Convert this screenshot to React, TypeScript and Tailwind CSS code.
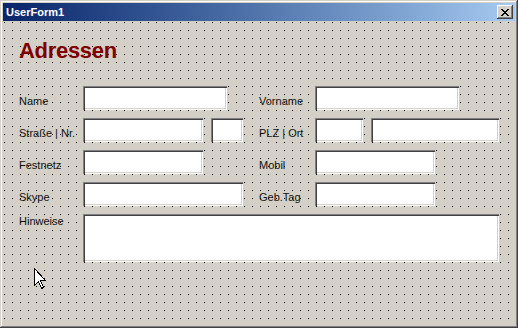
import type { ReactNode } from "react";

function Field({ className }: { className: string }) {
  return (
    <div
      className={`bg-white shadow-[inset_1px_1px_#808080,inset_2px_2px_#404040,inset_-1px_-1px_#ffffff,inset_-2px_-2px_#d4d0c8] ${className}`}
    />
  );
}

function Label({ children, className }: { children: ReactNode; className: string }) {
  return <div className={`shrink-0 text-[11px] leading-[13px] text-[#111] ${className}`}>{children}</div>;
}

function CloseGlyph() {
  const rows = ["XX....XX", ".XX..XX.", "..XXXX..", "...XX...", "..XXXX..", ".XX..XX.", "XX....XX"];
  return (
    <svg width="8" height="7" viewBox="0 0 8 7" shapeRendering="crispEdges">
      {rows.flatMap((r, y) =>
        r.split("").map((c, x) => (c === "X" ? <rect key={`${x}-${y}`} x={x} y={y} width="1" height="1" fill="#000" /> : null))
      )}
    </svg>
  );
}

function Cursor() {
  return (
    <svg
      className="absolute left-[34px] top-[268px]"
      width="13"
      height="22"
      viewBox="0 0 13 22"
      shapeRendering="crispEdges"
    >
      <path d="M0.5 0.5 V17.5 L4.5 13.5 L7.5 20.5 L9.5 19.5 L6.5 12.5 H11.5 Z" fill="#fff" stroke="#000" strokeWidth="1" />
    </svg>
  );
}

export default function App() {
  return (
    <div className="relative flex h-[328px] w-[518px] flex-col bg-[#d4d0c8] p-[3px] font-['Liberation_Sans',Arial,sans-serif] shadow-[inset_-1px_-1px_#404040,inset_1px_1px_#d4d0c8,inset_-2px_-2px_#808080,inset_2px_2px_#ffffff]">
      <div className="flex h-[18px] shrink-0 items-center justify-between bg-gradient-to-r from-[#0a246a] to-[#a6caf0] pl-[3px] pr-[2px]">
        <span className="text-[11px] font-bold leading-[18px] text-white">UserForm1</span>
        <div className="flex h-[14px] w-4 items-center justify-center bg-[#d4d0c8] shadow-[inset_-1px_-1px_#404040,inset_1px_1px_#ffffff,inset_-2px_-2px_#808080]">
          <CloseGlyph />
        </div>
      </div>

      <div className="flex-1 bg-[#d4d0c8] bg-[image:conic-gradient(from_270deg_at_1px_1px,#000_90deg,transparent_0)] bg-[length:8px_8px] bg-[position:1px_1px] pl-4 pt-[19px]">
        <h1 className="mb-6 h-[22px] text-[22px] font-bold leading-[22px] tracking-[-0.3px] text-[#800000]">Adressen</h1>

        <div className="flex flex-col gap-2">
          <div className="flex">
            <div className="flex w-[240px]">
              <Label className="w-16 pt-[9px]">Name</Label>
              <Field className="h-6 w-[144px]" />
            </div>
            <div className="flex">
              <Label className="w-14 pt-[9px]">Vorname</Label>
              <Field className="h-6 w-[144px]" />
            </div>
          </div>

          <div className="flex">
            <div className="flex w-[240px]">
              <Label className="w-16 pt-[9px]">Straße | Nr.</Label>
              <div className="flex gap-2">
                <Field className="h-6 w-[120px]" />
                <Field className="h-6 w-8" />
              </div>
            </div>
            <div className="flex">
              <Label className="w-14 pt-[9px]">PLZ | Ort</Label>
              <div className="flex gap-2">
                <Field className="h-6 w-12" />
                <Field className="h-6 w-32" />
              </div>
            </div>
          </div>

          <div className="flex">
            <div className="flex w-[240px]">
              <Label className="w-16 pt-[9px]">Festnetz</Label>
              <Field className="h-6 w-[120px]" />
            </div>
            <div className="flex">
              <Label className="w-14 pt-[9px]">Mobil</Label>
              <Field className="h-6 w-[120px]" />
            </div>
          </div>

          <div className="flex">
            <div className="flex w-[240px]">
              <Label className="w-16 pt-[9px]">Skype</Label>
              <Field className="h-6 w-40" />
            </div>
            <div className="flex">
              <Label className="w-14 pt-[9px]">Geb.Tag</Label>
              <Field className="h-6 w-[120px]" />
            </div>
          </div>

          <div className="flex">
            <Label className="w-16 pt-[1px]">Hinweise</Label>
            <Field className="h-12 w-[416px]" />
          </div>
        </div>
      </div>

      <Cursor />
    </div>
  );
}
